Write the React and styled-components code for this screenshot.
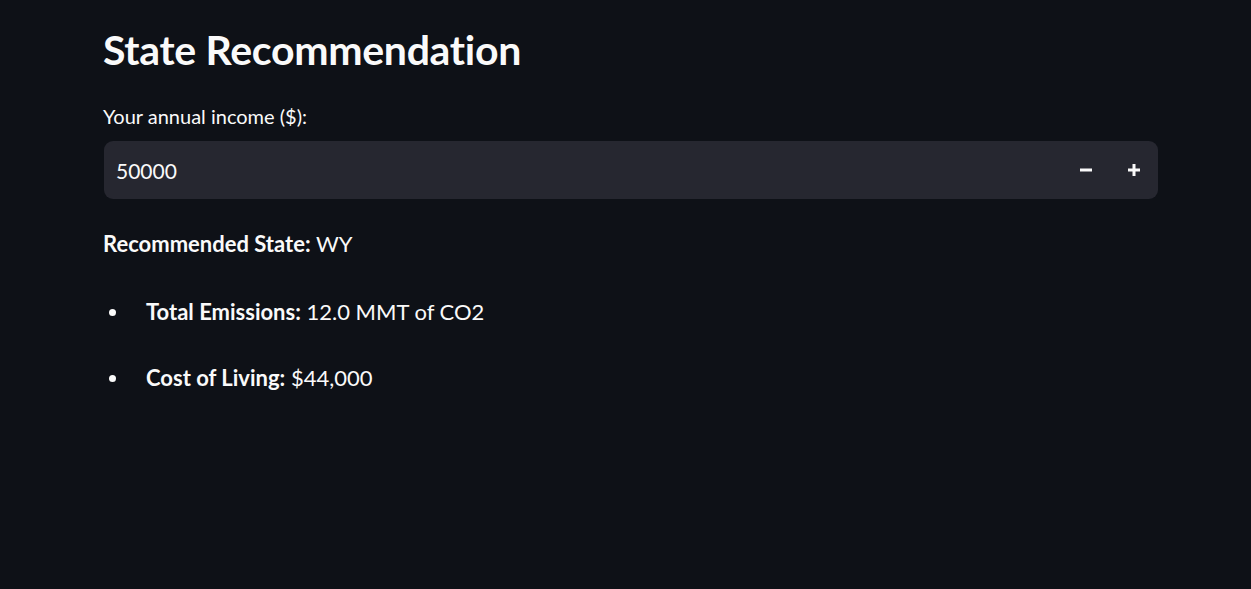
import React from "react";
import styled, { createGlobalStyle } from "styled-components";

const GlobalStyle = createGlobalStyle`
  html, body {
    margin: 0;
    padding: 0;
    background: #0e1117;
  }
  body {
    font-family: Lato, "Open Sans", sans-serif;
    color: #fafafa;
  }
`;

const Page = styled.div`
  min-height: 589px;
  background: #0e1117;
  padding: 20px 93px 0 103px;
  box-sizing: border-box;
`;

const Title = styled.h1`
  margin: 0 0 24px;
  font-size: 41px;
  line-height: 60px;
  font-weight: 700;
  letter-spacing: -0.3px;
`;

const Label = styled.label`
  display: block;
  font-size: 20px;
  line-height: 24px;
  margin-bottom: 13px;
`;

const NumberBox = styled.div`
  display: flex;
  align-items: center;
  height: 58px;
  margin-left: 1px;
  border-radius: 9px;
  background: #262730;
  padding: 0 0 0 12px;
`;

const Value = styled.div`
  flex: 1;
  font-size: 21px;
`;

const StepButton = styled.button`
  width: 48px;
  height: 58px;
  border: none;
  background: transparent;
  color: #fafafa;
  display: flex;
  align-items: center;
  justify-content: center;
  padding: 0;
  cursor: pointer;
`;

const Result = styled.p`
  margin: 30px 0 0;
  font-size: 22px;
  line-height: 30px;
`;

const List = styled.ul`
  margin: 38px 0 0;
  padding: 0;
  list-style: none;
`;

const Item = styled.li`
  display: flex;
  align-items: center;
  font-size: 22px;
  line-height: 30px;
  margin-bottom: 36px;
  &::before {
    content: "";
    width: 7px;
    height: 7px;
    border-radius: 50%;
    background: #fafafa;
    margin: 0 30px 0 6px;
  }
`;

function Minus() {
  return (
    <svg width="12" height="12" viewBox="0 0 12 12">
      <rect x="0" y="4.5" width="12" height="3" fill="#fafafa" />
    </svg>
  );
}

function Plus() {
  return (
    <svg width="12" height="12" viewBox="0 0 12 12">
      <rect x="0" y="4.5" width="12" height="3" fill="#fafafa" />
      <rect x="4.5" y="0" width="3" height="12" fill="#fafafa" />
    </svg>
  );
}

export default function App() {
  return (
    <>
      <GlobalStyle />
      <Page>
        <Title>State Recommendation</Title>
        <Label>Your annual income ($):</Label>
        <NumberBox>
          <Value>50000</Value>
          <StepButton aria-label="decrement">
            <Minus />
          </StepButton>
          <StepButton aria-label="increment">
            <Plus />
          </StepButton>
        </NumberBox>
        <Result>
          <strong>Recommended State:</strong> WY
        </Result>
        <List>
          <Item>
            <span>
              <strong>Total Emissions:</strong> 12.0 MMT of CO2
            </span>
          </Item>
          <Item>
            <span>
              <strong>Cost of Living:</strong> $44,000
            </span>
          </Item>
        </List>
      </Page>
    </>
  );
}
